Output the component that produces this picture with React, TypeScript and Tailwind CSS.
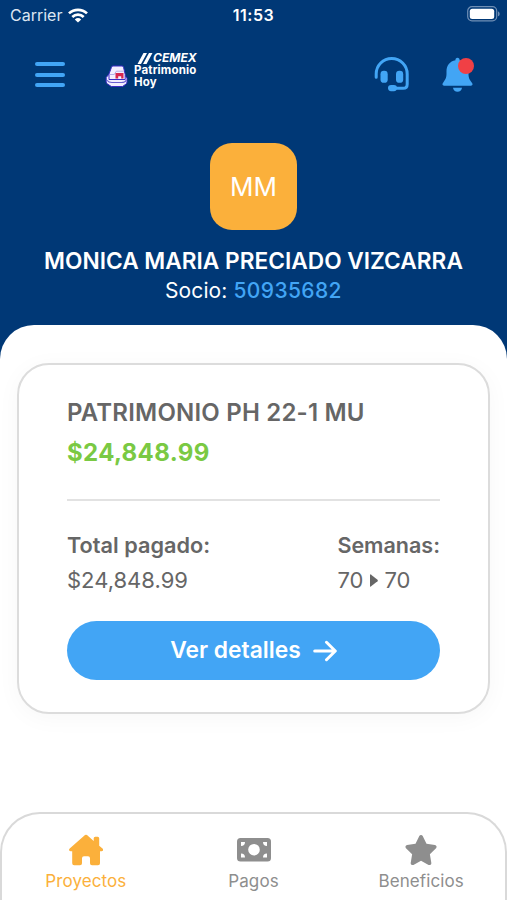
import React from 'react';
import { FaStar } from 'react-icons/fa6';

const WifiIcon = () => (
  <svg className="w-5 h-[15px]" viewBox="0 0 20 15" fill="none" stroke="white" strokeWidth="2.7">
    <path d="M1 5.4a13 13 0 0 1 18 0" />
    <path d="M4.3 9a8.2 8.2 0 0 1 11.4 0" />
    <path d="M10 14.5 6.8 11.4a4.7 4.7 0 0 1 6.4 0Z" fill="white" stroke="none" />
  </svg>
);

const BatteryIcon = () => (
  <svg className="w-[34px] h-4" viewBox="0 0 34 16">
    <rect x="0.7" y="0.7" width="29" height="14.2" rx="4.3" fill="none" stroke="#6f8fb5" strokeWidth="1.2" />
    <rect x="2.8" y="2.7" width="24.4" height="10.3" rx="2.5" fill="white" />
    <path d="M31 5.5c2.2.6 2.2 4.2 0 4.8Z" fill="#6f8fb5" />
  </svg>
);

const HouseLogo = () => (
  <svg className="w-[23px] h-[23px]" viewBox="0 0 23 23">
    <path d="M4.5 8.5 1.2 12.5v4.3q0 1.5 1.5 2.3l3.6 2.4h11.2l3.5-2.4q1-.7 1-2.3v-3.3q0-1.5-2-2.5Z" fill="#f2efff" stroke="#3a2bc4" strokeWidth="1" />
    <path d="M6.5 2.2q.3-1.2 1.5-1.2h9q1.2 0 1.5 1.2l1.7 7.3v5H4V9Z" fill="#f2efff" stroke="#3a2bc4" strokeWidth="1" />
    <path d="M4.8 9.5h4.5l2-3.300h7.500" fill="none" stroke="#b5aee6" strokeWidth="1" />
    <path d="M10.5 8h8v5.5h-2.3v-2.3h-3v2.3h-2.7Z" fill="#d8284f" />
    <path d="M2 15.2q1.5 2.3 5 2.3h9.500q3.500 0 4.800-2.300" fill="none" stroke="#6a5fd0" strokeWidth="1.1" />
  </svg>
);

const HeadsetIcon = () => (
  <svg className="w-9 h-[35px]" viewBox="0 0 36 35" fill="none" stroke="#42a5f5" strokeWidth="3" strokeLinecap="round">
    <path d="M2.2 20.3V17a15.5 15.5 0 0 1 31 0v10.2q0 4.1-4.1 4.1H19" />
    <rect x="6.5" y="13.8" width="7.2" height="12" rx="3.4" fill="#42a5f5" stroke="none" />
    <rect x="22" y="13.8" width="7.2" height="12" rx="3.4" fill="#42a5f5" stroke="none" />
    <rect x="14" y="28" width="9" height="6.2" rx="3.1" fill="#42a5f5" stroke="none" />
  </svg>
);

const BellIcon = () => (
  <svg className="w-[31px] h-[35px]" viewBox="0 0 31 35" fill="#42a5f5">
    <path d="M13.5 2q2-2.5 4 0v1.3c5.8 1 9 5.2 9 11v3c0 3 .8 5 2.3 7l1.4 1.9c.8 1.2.1 2.5-1.3 2.5H2.1c-1.4 0-2.1-1.3-1.3-2.5L2.2 24c1.5-2 2.3-4 2.3-7v-2.7c0-5.8 3.2-10 9-11Z" />
    <path d="M11 30.8h9c-.5 2.5-2 4-4.5 4s-4-1.5-4.5-4Z" />
  </svg>
);

const HomeIcon = () => (
  <svg className="w-[34px] h-8" viewBox="0 0 34 32" fill="currentColor">
    <path d="M16 1.1q1-.9 2 0l6.7 5.8V4.2q0-1.5 1.5-1.5h2.5q1.5 0 1.5 1.5v7.6l3.3 2.7c1.2 1.1.7 2.7-.9 2.7h-1.6v12q0 2-2 2h-6q-2 0-2-2v-5q0-2-2-2h-4q-2 0-2 2v5q0 2-2 2H5.2q-2 0-2-2v-12H1.6c-1.6 0-2.1-1.6-.9-2.7Z" />
  </svg>
);

const MoneyIcon = () => (
  <svg className="w-[34px] h-6" viewBox="0 0 34 24">
    <rect width="34" height="23.5" rx="3.5" fill="currentColor" />
    <circle cx="17" cy="11.7" r="5.8" fill="white" />
    <path d="M4 4h4a4 4 0 0 1-4 4ZM30 4h-4a4 4 0 0 0 4 4ZM4 19.5h4a4 4 0 0 0-4-4ZM30 19.5h-4a4 4 0 0 1 4-4Z" fill="white" />
  </svg>
);

const ArrowIcon = () => (
  <svg className="mt-0.5 w-6 h-[22px]" viewBox="0 0 24 22" fill="none" stroke="white" strokeWidth="3" strokeLinecap="round" strokeLinejoin="round">
    <path d="M1.7 11h20M13.5 2.3l8.8 8.7-8.8 8.7" />
  </svg>
);

interface TabProps {
  icon: React.ReactNode;
  label: string;
  active?: boolean;
}

const Tab: React.FC<TabProps> = ({ icon, label, active }) => (
  <button className={`flex flex-1 flex-col items-center ${active ? 'text-[#fbb03b]' : 'text-[#8e8e8e]'}`}>
    <span className="flex h-8 items-center">{icon}</span>
    <span className="mt-[3px] text-[17px] leading-6 tracking-[0.1px]">{label}</span>
  </button>
);

export default function App() {
  return (
    <div className="flex h-[900px] w-[507px] flex-col overflow-hidden bg-[#003876] font-['Inter',sans-serif]">
      <header className="h-[325px] shrink-0 text-white">
        <div className="grid h-[30px] grid-cols-3 items-center pl-2.5 pr-1.5">
          <div className="flex items-center gap-1.5 text-base text-[#dce6f2]">
            Carrier
            <WifiIcon />
          </div>
          <span className="pr-1 text-center text-base font-semibold tracking-[0.5px]">11:53</span>
          <div className="flex justify-end pb-0.5">
            <BatteryIcon />
          </div>
        </div>

        <div className="flex h-[113px] items-start pl-[35px] pr-[34px] pt-[27px]">
          <button className="mt-[5px] flex w-[30px] flex-col gap-[6.5px]">
            <span className="h-1 w-full rounded-full bg-[#42a5f5]" />
            <span className="h-1 w-full rounded-full bg-[#42a5f5]" />
            <span className="h-1 w-full rounded-full bg-[#42a5f5]" />
          </button>
          <div className="ml-10 flex items-start">
            <div className="mt-2">
              <HouseLogo />
            </div>
            <div className="-mt-[5px] ml-[6px]">
              <div className="flex h-3 items-center pl-[3px]">
                <svg className="h-[11px] w-4" viewBox="0 0 16 11" fill="white">
                  <path d="M6.5 0H10L4 11H.5ZM12 0h3.5l-6 11H6Z" />
                </svg>
                <span className="text-[12px] font-bold italic leading-3">CEMEX</span>
              </div>
              <div className="text-[11.5px] font-bold leading-3 tracking-[0.15px]">
                Patrimonio
                <br />
                Hoy
              </div>
            </div>
          </div>
          <div className="ml-auto flex items-start gap-8">
            <HeadsetIcon />
            <div className="relative">
              <BellIcon />
              <span className="absolute -right-[1px] top-[1px] h-4 w-4 rounded-full bg-[#f04045]" />
            </div>
          </div>
        </div>

        <div className="mx-auto flex h-[87px] w-[87px] items-center justify-center rounded-[22px] bg-[#fbb03b] text-[26px]">
          MM
        </div>
        <h1 className="mt-4 text-center text-[22.7px] font-semibold leading-[30px]">
          MONICA MARIA PRECIADO VIZCARRA
        </h1>
        <p className="text-center text-[21px] leading-[29px] tracking-[0.1px]">
          Socio: <span className="font-medium tracking-[0.4px] text-[#42a5f5]">50935682</span>
        </p>
      </header>

      <main className="flex flex-1 flex-col rounded-t-[34px] bg-white pt-[38px]">
        <section className="mx-[17px] h-[351px] rounded-[32px] border-2 border-[#dcdcdc] bg-white px-12 pt-8 text-[#666] shadow-[0_4px_24px_rgba(0,0,0,0.035)]">
          <h2 className="text-2xl font-semibold leading-8 tracking-[0.2px]">PATRIMONIO PH 22-1 MU</h2>
          <p className="mt-2 text-2xl font-bold leading-8 tracking-[0.35px] text-[#7ac943]">$24,848.99</p>
          <hr className="mt-[30px] border-t-2 border-[#e2e2e2]" />

          <div className="mt-[30px] flex justify-between">
            <div>
              <p className="text-[21.7px] font-semibold leading-7">Total pagado:</p>
              <p className="mt-[7px] text-[22px] leading-7">$24,848.99</p>
            </div>
            <div>
              <p className="text-[21.5px] font-semibold leading-7">Semanas:</p>
              <p className="mt-[7px] flex items-center text-[22px] leading-7">
                70
                <svg className="ml-[7px] mr-1.5 h-[13px] w-2" viewBox="0 0 8 13" fill="currentColor">
                  <path d="M0 .8Q0 0 .8.5l6.7 5.3q.7.7 0 1.4L.8 12.5Q0 13 0 12.2Z" />
                </svg>
                70
              </p>
            </div>
          </div>

          <button className="mt-[27px] flex h-[59px] w-full items-center justify-center gap-3 rounded-full bg-[#42a5f5] pb-px text-[22.8px] font-semibold text-white">
            Ver detalles
            <ArrowIcon />
          </button>
        </section>

        <nav className="mt-auto flex h-[88px] rounded-t-[40px] border-x-2 border-t-2 border-[#d9d9d9] bg-white pt-5">
          <Tab icon={<HomeIcon />} label="Proyectos" active />
          <Tab icon={<MoneyIcon />} label="Pagos" />
          <Tab icon={<FaStar className="h-8 w-[34px]" />} label="Beneficios" />
        </nav>
      </main>
    </div>
  );
}
